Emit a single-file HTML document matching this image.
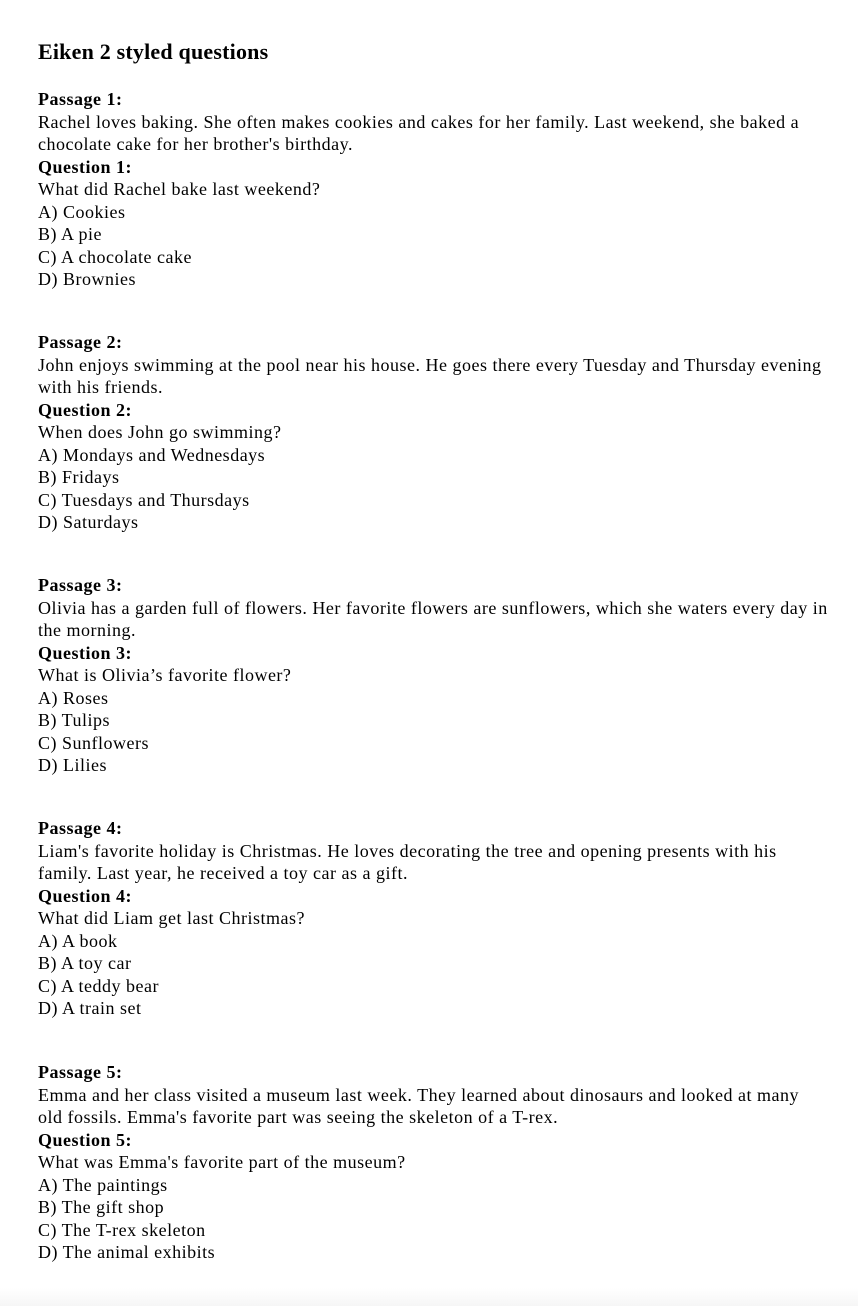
<!DOCTYPE html>
<html><head><meta charset="utf-8">
<style>
html,body{margin:0;padding:0;background:#fff;}
body{width:858px;height:1306px;overflow:hidden;font-family:"Liberation Serif",serif;color:#000;position:relative;}
h1{position:absolute;left:38px;top:38px;margin:0;font-size:22px;line-height:28px;font-weight:bold;letter-spacing:0.2px;}
.b{position:absolute;left:38px;font-size:18px;line-height:22.5px;white-space:nowrap;letter-spacing:0.5px;}
.b b{font-weight:bold;}
.fade{position:absolute;left:0;right:0;bottom:0;height:18px;background:linear-gradient(#fff,#f6f6f6);}
</style></head><body>
<h1>Eiken 2 styled questions</h1>
<div class="b" style="top:88px"><b>Passage 1:</b><br>Rachel loves baking. She often makes cookies and cakes for her family. Last weekend, she baked a<br>chocolate cake for her brother's birthday.<br><b>Question 1:</b><br>What did Rachel bake last weekend?<br>A) Cookies<br>B) A pie<br>C) A chocolate cake<br>D) Brownies</div>
<div class="b" style="top:331px"><b>Passage 2:</b><br>John enjoys swimming at the pool near his house. He goes there every Tuesday and Thursday evening<br>with his friends.<br><b>Question 2:</b><br>When does John go swimming?<br>A) Mondays and Wednesdays<br>B) Fridays<br>C) Tuesdays and Thursdays<br>D) Saturdays</div>
<div class="b" style="top:574px"><b>Passage 3:</b><br>Olivia has a garden full of flowers. Her favorite flowers are sunflowers, which she waters every day in<br>the morning.<br><b>Question 3:</b><br>What is Olivia’s favorite flower?<br>A) Roses<br>B) Tulips<br>C) Sunflowers<br>D) Lilies</div>
<div class="b" style="top:817px"><b>Passage 4:</b><br>Liam's favorite holiday is Christmas. He loves decorating the tree and opening presents with his<br>family. Last year, he received a toy car as a gift.<br><b>Question 4:</b><br>What did Liam get last Christmas?<br>A) A book<br>B) A toy car<br>C) A teddy bear<br>D) A train set</div>
<div class="b" style="top:1061px"><b>Passage 5:</b><br>Emma and her class visited a museum last week. They learned about dinosaurs and looked at many<br>old fossils. Emma's favorite part was seeing the skeleton of a T-rex.<br><b>Question 5:</b><br>What was Emma's favorite part of the museum?<br>A) The paintings<br>B) The gift shop<br>C) The T-rex skeleton<br>D) The animal exhibits</div>
<div class="fade"></div>
</body></html>
